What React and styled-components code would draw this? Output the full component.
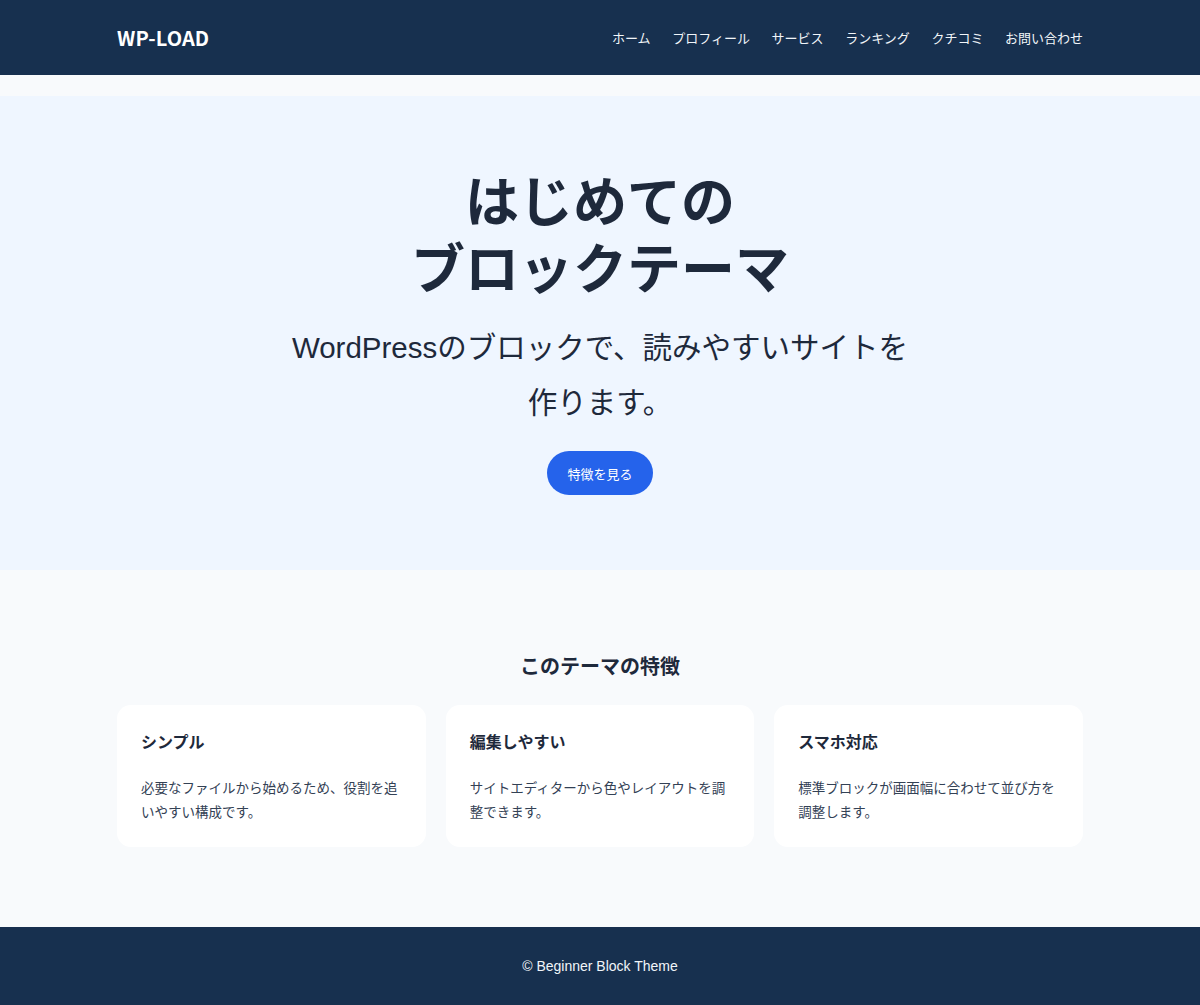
import React from "react";
import styled, { createGlobalStyle } from "styled-components";

const GlobalStyle = createGlobalStyle`
  * { box-sizing: border-box; }
  html, body { margin: 0; padding: 0; }
  body {
    background: #f8fafc;
    color: #1e293b;
    font-family: "Liberation Sans", "Noto Sans CJK JP", sans-serif;
    -webkit-font-smoothing: antialiased;
  }
`;

const Header = styled.header`
  background: #17304f;
  height: 75px;
`;

const Container = styled.div`
  max-width: 966px;
  margin: 0 auto;
  height: 100%;
`;

const HeaderInner = styled(Container)`
  display: flex;
  align-items: center;
  justify-content: space-between;
`;

const Logo = styled.div`
  color: #ffffff;
  font-family: "Noto Sans CJK JP", "Liberation Sans", sans-serif;
  font-weight: 700;
  font-size: 20px;
  letter-spacing: 0.1px;
`;

const Nav = styled.nav`
  display: flex;
  gap: 21.6px;
`;

const NavLink = styled.a`
  color: #f1f5f9;
  font-family: "Noto Sans CJK JP", sans-serif;
  font-size: 13px;
  text-decoration: none;
`;

const Main = styled.main`
  padding-top: 21px;
`;

const Hero = styled.section`
  background: #eff6ff;
  padding: 69px 20px 75px;
  text-align: center;
`;

const HeroTitle = styled.h1`
  margin: 0;
  font-family: "Noto Sans CJK JP", sans-serif;
  font-weight: 700;
  font-size: 54px;
  line-height: 67px;
  color: #1e293b;
`;

const HeroLead = styled.p`
  margin: 21px auto 0;
  font-size: 29.5px;
  line-height: 55px;
  color: #1e293b;
  max-width: 632px;
`;

const Button = styled.a`
  display: inline-flex;
  align-items: center;
  justify-content: center;
  margin-top: 21px;
  height: 44px;
  padding: 0 20px;
  border-radius: 999px;
  background: #2563eb;
  color: #ffffff;
  font-family: "Noto Sans CJK JP", sans-serif;
  font-size: 13px;
  text-decoration: none;
`;

const Features = styled.section`
  background: #f8fafc;
  padding: 82px 0 80px;
`;

const SectionTitle = styled.h2`
  margin: 0 0 25px;
  text-align: center;
  font-family: "Noto Sans CJK JP", sans-serif;
  font-weight: 700;
  font-size: 20px;
  line-height: 28px;
  color: #1e293b;
`;

const CardGrid = styled.div`
  display: grid;
  grid-template-columns: repeat(3, 1fr);
  gap: 20px;
`;

const Card = styled.div`
  background: #ffffff;
  border-radius: 14px;
  padding: 24px;
  height: 142px;
`;

const CardTitle = styled.h3`
  margin: 0 0 22px;
  font-family: "Noto Sans CJK JP", sans-serif;
  font-weight: 700;
  font-size: 16px;
  line-height: 24px;
  color: #1e293b;
`;

const CardText = styled.p`
  margin: 0;
  font-family: "Noto Sans CJK JP", sans-serif;
  font-size: 13.5px;
  line-height: 24px;
  color: #334155;
`;

const Footer = styled.footer`
  background: #17304f;
  height: 78px;
  display: flex;
  align-items: center;
  justify-content: center;
  color: #f1f5f9;
  font-family: "Liberation Sans", sans-serif;
  font-size: 14px;
`;

const navItems = ["ホーム", "プロフィール", "サービス", "ランキング", "クチコミ", "お問い合わせ"];

const features = [
  { title: "シンプル", text: "必要なファイルから始めるため、役割を追いやすい構成です。" },
  { title: "編集しやすい", text: "サイトエディターから色やレイアウトを調整できます。" },
  { title: "スマホ対応", text: "標準ブロックが画面幅に合わせて並び方を調整します。" },
];

export default function App() {
  return (
    <>
      <GlobalStyle />
      <Header>
        <HeaderInner>
          <Logo>WP-LOAD</Logo>
          <Nav>
            {navItems.map((n) => (
              <NavLink key={n} href="#">{n}</NavLink>
            ))}
          </Nav>
        </HeaderInner>
      </Header>
      <Main>
        <Hero>
          <HeroTitle>
            はじめての
            <br />
            ブロックテーマ
          </HeroTitle>
          <HeroLead>WordPressのブロックで、読みやすいサイトを作ります。</HeroLead>
          <Button href="#">特徴を見る</Button>
        </Hero>
        <Features>
          <Container>
            <SectionTitle>このテーマの特徴</SectionTitle>
            <CardGrid>
              {features.map((f) => (
                <Card key={f.title}>
                  <CardTitle>{f.title}</CardTitle>
                  <CardText>{f.text}</CardText>
                </Card>
              ))}
            </CardGrid>
          </Container>
        </Features>
      </Main>
      <Footer>© Beginner Block Theme</Footer>
    </>
  );
}
